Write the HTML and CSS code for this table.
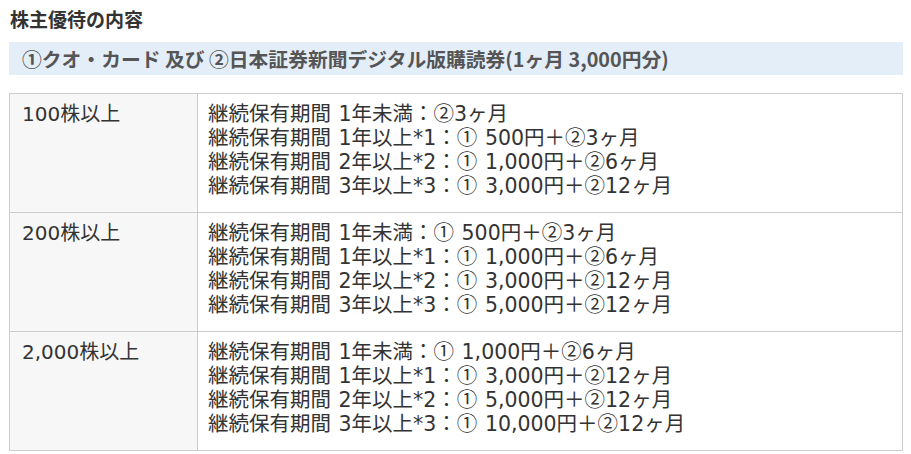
FILE: index.html
```html
<!DOCTYPE html>
<html lang="ja">
<head>
<meta charset="utf-8">
<title>株主優待の内容</title>
<link rel="stylesheet" href="styles.css">
</head>
<body>
<div class="wrap">
  <h2 class="title">株主優待の内容</h2>
  <div class="band">①クオ・カード 及び ②日本証券新聞デジタル版購読券(1ヶ月 3,000円分)</div>
  <table class="benefits">
    <tr>
      <th class="shares">100株以上</th>
      <td class="detail">継続保有期間 1年未満：<span class="c">②</span>3ヶ月<br>継続保有期間 1年以上*1：<span class="c">①</span> 500円＋<span class="c">②</span>3ヶ月<br>継続保有期間 2年以上*2：<span class="c">①</span> 1,000円＋<span class="c">②</span>6ヶ月<br>継続保有期間 3年以上*3：<span class="c">①</span> 3,000円＋<span class="c">②</span>12ヶ月</td>
    </tr>
    <tr>
      <th class="shares">200株以上</th>
      <td class="detail">継続保有期間 1年未満：<span class="c">①</span> 500円＋<span class="c">②</span>3ヶ月<br>継続保有期間 1年以上*1：<span class="c">①</span> 1,000円＋<span class="c">②</span>6ヶ月<br>継続保有期間 2年以上*2：<span class="c">①</span> 3,000円＋<span class="c">②</span>12ヶ月<br>継続保有期間 3年以上*3：<span class="c">①</span> 5,000円＋<span class="c">②</span>12ヶ月</td>
    </tr>
    <tr>
      <th class="shares">2,000株以上</th>
      <td class="detail">継続保有期間 1年未満：<span class="c">①</span> 1,000円＋<span class="c">②</span>6ヶ月<br>継続保有期間 1年以上*1：<span class="c">①</span> 3,000円＋<span class="c">②</span>12ヶ月<br>継続保有期間 2年以上*2：<span class="c">①</span> 5,000円＋<span class="c">②</span>12ヶ月<br>継続保有期間 3年以上*3：<span class="c">①</span> 10,000円＋<span class="c">②</span>12ヶ月</td>
    </tr>
  </table>
</div>
</body>
</html>
```
FILE: styles.css
```css
html, body {
  margin: 0;
  padding: 0;
  background: #fff;
}
body {
  font-family: "DejaVu Sans", "Noto Sans CJK JP", sans-serif;
  color: #333;
}
.wrap {
  padding: 0 8px 0 9px;
}
.title {
  margin: 0;
  padding: 8px 0 0 1px;
  font-family: "Noto Sans CJK JP", sans-serif;
  font-size: 19px;
  line-height: 22px;
  font-weight: bold;
  color: #333;
}
.band {
  margin-top: 12px;
  height: 33px;
  line-height: 33px;
  padding-left: 13px;
  background: #e4eef9;
  color: #555;
  font-family: "Noto Sans CJK JP", sans-serif;
  font-size: 19.8px;
  font-weight: bold;
  white-space: nowrap;
}
.benefits {
  margin-top: 18px;
  width: 100%;
  border-collapse: collapse;
  font-size: 20.5px;
  line-height: 24px;
  word-spacing: 1px;
}
.benefits th,
.benefits td {
  border: 1px solid #ccc;
  vertical-align: top;
  text-align: left;
  font-weight: normal;
  padding: 8px 10px 14px;
  color: #333;
}
.benefits .shares {
  width: 165px;
  background: #f7f7f7;
  padding-left: 12px;
  font-size: 20px;
}
.benefits .detail {
  background: #fff;
}
.c {
  font-family: "Noto Sans CJK JP", sans-serif;
  line-height: 0.95;
}
```
